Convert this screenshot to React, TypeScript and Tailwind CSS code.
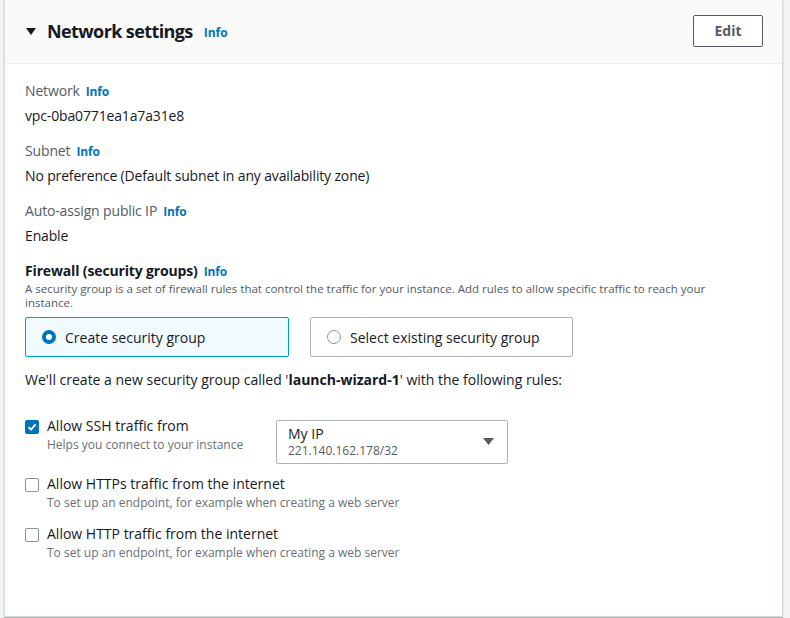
import React from 'react';

const font = { fontFamily: '"Open Sans", "Liberation Sans", Arial, sans-serif' };

const Info = () => <span className="text-[12px] font-bold text-[#0073bb] ml-[6px] mt-[3px]">Info</span>;

const Field = ({ label, value, top }: { label: string; value: string; top: string }) => (
  <div className={top}>
    <div className="flex items-center h-[20px] text-[14px] text-[#545b64] tracking-[-0.15px]">
      {label}
      <Info />
    </div>
    <div className="mt-[6px] h-[20px] leading-[20px] text-[14px] text-[#16191f] tracking-[-0.15px]">{value}</div>
  </div>
);

const Check = ({ checked, label, help, top }: { checked?: boolean; label: string; help: string; top: string }) => (
  <div className={`flex ${top}`}>
    <div
      className={`mt-[4px] w-[14px] h-[14px] rounded-[2px] flex items-center justify-center shrink-0 ${
        checked ? 'bg-[#0073bb]' : 'border-[1.5px] border-[#879596] bg-white'
      }`}
    >
      {checked && (
        <svg width="10" height="10" viewBox="0 0 10 10">
          <path d="M1.5 5.2 L4 7.6 L8.5 2.4" stroke="white" strokeWidth="1.8" fill="none" />
        </svg>
      )}
    </div>
    <div className="ml-[8px]">
      <div className="h-[20px] leading-[20px] text-[14px] text-[#16191f]">{label}</div>
      <div className="h-[17px] leading-[17px] text-[12px] text-[#687078]">{help}</div>
    </div>
  </div>
);

export default function App() {
  return (
    <div className="w-[790px] h-[618px] bg-[#f2f3f3] pl-[4px] pr-[7px] overflow-hidden" style={font}>
      <div className="h-[617px] bg-white border-x border-b border-[#d5dbdb] shadow-[0_1px_1px_0_rgba(0,28,36,0.3)]">
        <div className="h-[64px] bg-[#fafafa] border-b border-[#eaeded] flex items-center pl-[21px] pr-[19px]">
          <svg width="10" height="8" viewBox="0 0 10 8" className="mt-[1px]">
            <path d="M0 0 H10 L5 7 Z" fill="#16191f" />
          </svg>
          <span className="ml-[11px] text-[18px] font-bold text-[#16191f] tracking-[-0.6px]">Network settings</span>
          <span className="text-[12px] font-bold text-[#0073bb] ml-[11px] mt-[3px]">Info</span>
          <button className="ml-auto w-[70px] h-[32px] border border-[#545b64] rounded-[2px] bg-white text-[14px] font-bold text-[#545b64] mt-[-2px]">
            Edit
          </button>
        </div>

        <div className="pl-[20px] pr-[20px]">
          <Field label="Network" value="vpc-0ba0771ea1a7a31e8" top="pt-[16px]" />
          <Field label="Subnet" value="No preference (Default subnet in any availability zone)" top="mt-[14px]" />
          <Field label="Auto-assign public IP" value="Enable" top="mt-[14px]" />

          <div className="mt-[14px]">
            <div className="flex items-center h-[20px] text-[14px] font-bold text-[#16191f] tracking-[-0.15px]">
              Firewall (security groups)
              <Info />
            </div>
            <div className="mt-[2px] text-[11.5px] leading-[14px] text-[#545b64] pr-[30px]">
              A security group is a set of firewall rules that control the traffic for your instance. Add rules to allow specific traffic to reach your instance.
            </div>
            <div className="mt-[7px] flex gap-[21px]">
              <div className="w-[264px] h-[40px] bg-[#f1faff] border border-[#00a1c9] rounded-[2px] flex items-center pl-[16px]">
                <div className="w-[14px] h-[14px] rounded-full border-[4px] border-[#0073bb] bg-white" />
                <span className="ml-[9px] text-[14px] text-[#16191f]">Create security group</span>
              </div>
              <div className="w-[263px] h-[40px] bg-white border border-[#aab7b8] rounded-[2px] flex items-center pl-[16px]">
                <div className="w-[14px] h-[14px] rounded-full border-[1.5px] border-[#879596] bg-white" />
                <span className="ml-[9px] text-[14px] text-[#16191f]">Select existing security group</span>
              </div>
            </div>
            <div className="mt-[13px] h-[20px] leading-[20px] text-[14px] text-[#16191f]">
              We'll create a new security group called '<span className="font-bold">launch-wizard-1</span>' with the following rules:
            </div>
          </div>

          <div className="mt-[26px] flex items-start">
            <Check checked label="Allow SSH traffic from" help="Helps you connect to your instance" top="" />
            <div className="ml-auto mr-[254px] mt-[4px] w-[232px] h-[44px] border border-[#aab7b8] rounded-[2px] flex items-center pl-[11px] pr-[13px]">
              <div>
                <div className="h-[18px] leading-[18px] text-[14px] text-[#16191f]">My IP</div>
                <div className="h-[16px] leading-[16px] text-[12px] text-[#545b64]">221.140.162.178/32</div>
              </div>
              <svg width="11" height="8" viewBox="0 0 11 8" className="ml-auto">
                <path d="M0 0 H11 L5.5 7 Z" fill="#545b64" />
              </svg>
            </div>
          </div>
          <Check label="Allow HTTPs traffic from the internet" help="To set up an endpoint, for example when creating a web server" top="mt-[10px]" />
          <Check label="Allow HTTP traffic from the internet" help="To set up an endpoint, for example when creating a web server" top="mt-[13px]" />
        </div>
      </div>
    </div>
  );
}
